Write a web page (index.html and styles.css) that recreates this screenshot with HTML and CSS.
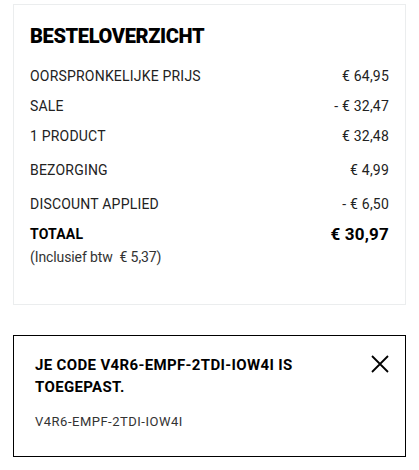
FILE: index.html
```html
<!DOCTYPE html>
<html lang="nl">
<head>
<meta charset="utf-8">
<link rel="stylesheet" href="styles.css">
</head>
<body>
<div class="page">
  <section class="summary">
    <h2 class="title">BESTELOVERZICHT</h2>
    <div class="rows">
      <div class="row"><span>OORSPRONKELIJKE PRIJS</span><span>€ 64,95</span></div>
      <div class="row"><span>SALE</span><span>- € 32,47</span></div>
      <div class="row"><span>1 PRODUCT</span><span>€ 32,48</span></div>
      <div class="row row-tall"><span>BEZORGING</span><span>€ 4,99</span></div>
      <div class="row row-tall"><span>DISCOUNT APPLIED</span><span>- € 6,50</span></div>
      <div class="row row-total"><span>TOTAAL</span><span class="total-value">€ 30,97</span></div>
      <div class="vat">(Inclusief btw&nbsp; € 5,37)</div>
    </div>
  </section>
  <section class="notice">
    <div class="notice-text">
      <p class="notice-title">JE CODE V4R6-EMPF-2TDI-IOW4I IS TOEGEPAST.</p>
      <p class="notice-code">V4R6-EMPF-2TDI-IOW4I</p>
    </div>
    <button class="close" aria-label="Sluiten">
      <svg width="18" height="18" viewBox="0 0 18 18"><path d="M1 1 L17 17 M17 1 L1 17" stroke="#000" stroke-width="1.8" fill="none"/></svg>
    </button>
  </section>
</div>
</body>
</html>
```
FILE: styles.css
```css
* { box-sizing: border-box; }
html, body { margin: 0; padding: 0; background: #fff; }
body { font-family: Roboto, "Liberation Sans", sans-serif; color: #000; }
.page { padding: 4px 13px 0 13px; width: 419px; }
.summary {
  border: 1px solid #ebedee;
  height: 301px;
  padding: 19px 16px 0 16px;
}
.title {
  margin: 0;
  font-size: 20px;
  line-height: 24px;
  font-weight: 900;
  letter-spacing: -0.35px;
}
.rows { margin-top: 13px; }
.row {
  display: flex;
  justify-content: space-between;
  font-size: 14px;
  line-height: 30px;
  height: 30px;
  color: #222;
  letter-spacing: 0.2px;
}
.row-tall { height: 34px; line-height: 38px; }
.row-total { font-weight: 700; color: #000; height: 30px; line-height: 30px; }
.total-value { font-size: 17px; }
.vat { font-size: 14px; line-height: 16px; color: #333; letter-spacing: -0.1px; }
.notice {
  margin-top: 30px;
  border: 1px solid #000;
  height: 122px;
  display: flex;
  justify-content: space-between;
  align-items: flex-start;
  padding: 18px 16px 0 21px;
}
.notice-title {
  margin: 0;
  font-size: 15px;
  line-height: 22px;
  font-weight: 700;
  width: 290px;
  letter-spacing: 0.35px;
}
.notice-code {
  margin: 16px 0 0 0;
  font-size: 13px;
  line-height: 16px;
  color: #333;
  letter-spacing: 0.5px;
}
.close {
  border: 0;
  background: none;
  padding: 0;
  margin-top: 1px;
  width: 18px;
  height: 18px;
  cursor: pointer;
}
.close svg { display: block; }
```
